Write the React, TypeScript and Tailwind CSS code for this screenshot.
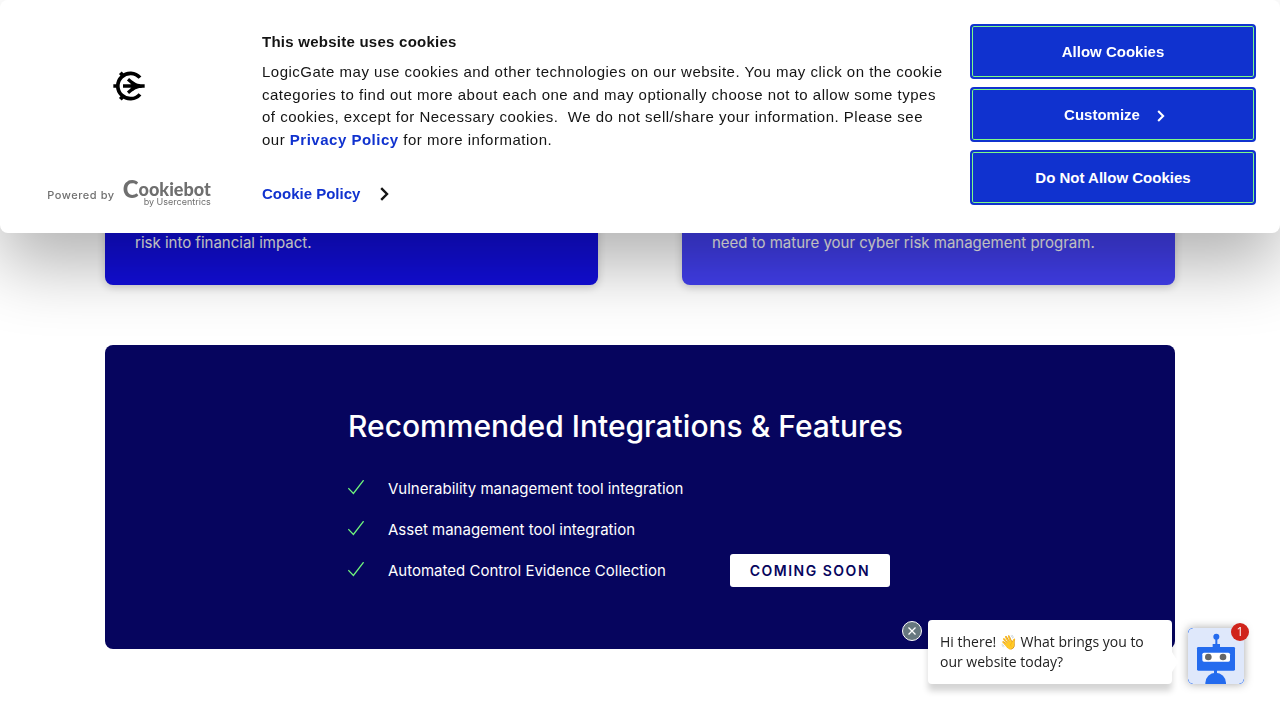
import React from "react";

function LogicGateMark() {
  return (
    <svg className="h-8 w-8" viewBox="68 59 96 96" role="img" aria-label="LogicGate">
      <g fill="none" stroke="#000">
        <path d="M149 82 A38 38 0 1 0 149 132" strokeWidth="11" />
        <path d="M69 107H84M90 67L99 77M90 147L99 137" strokeWidth="11" />
        <path d="M98 107H140M113 87L136 106M113 127L136 108" strokeWidth="10" />
      </g>
      <path d="M126 91C137 100 146 102 163 102V112C146 112 137 114 126 123L120 116L130 107L120 98Z" fill="#000" />
    </svg>
  );
}

function Chevron({ className }: { className: string }) {
  return (
    <svg className={className} viewBox="0 0 9 14" fill="none" stroke="currentColor" strokeWidth="2.4" aria-hidden="true">
      <path d="M1.2 1.2L7 7L1.2 12.8" />
    </svg>
  );
}

function Check() {
  return (
    <svg className="h-4 w-4 shrink-0" viewBox="0 0 16 16" fill="none" stroke="#6ff57c" strokeWidth="1.3" aria-hidden="true">
      <path d="M0.3 8.2L5.4 13.4L15.6 0.2" />
    </svg>
  );
}

function ConsentButton({ children }: { children: React.ReactNode }) {
  return (
    <button
      type="button"
      className="flex h-[55px] w-full items-center justify-center rounded border-2 border-[#1032cf] bg-[#1032cf] pt-px text-[15px] font-semibold text-white shadow-[inset_0_0_0_1px_#7dfa86]"
    >
      {children}
    </button>
  );
}

function CookieBanner() {
  return (
    <section
      aria-label="Cookie consent"
      className="fixed inset-x-0 top-0 z-20 flex rounded-lg bg-white px-6 pt-6 pb-[25px] font-['Liberation_Sans',sans-serif] text-[15px] text-[#141414] shadow-[0_32px_68px_rgba(0,0,0,0.3)]"
    >
      <div className="mr-7 flex min-h-[184px] w-[210px] shrink-0 flex-col items-center justify-between pt-[46px]">
        <LogicGateMark />
        <a href="#cookiebot" className="flex items-center gap-2 text-[#6f6f6f]">
          <span className="pt-px font-[Inter,sans-serif] text-[11px] leading-4 font-medium tracking-wider">Powered by</span>
          <span className="flex flex-col items-end">
            <span className="flex h-[15px] items-center font-[Lato,sans-serif] leading-[15px] font-black">
              <span className="text-[24px]">C</span>
              <span className="pt-px text-[18px]">ookiebot</span>
            </span>
            <span className="font-[Inter,sans-serif] text-[9px] leading-[12px]">by Usercentrics</span>
          </span>
        </a>
      </div>

      <div className="mr-6 flex-1 pt-[7px]">
        <h2 className="leading-[22px] font-bold tracking-[0.25px]">This website uses cookies</h2>
        <p className="mt-2 leading-normal tracking-[0.5px]">
          LogicGate may use cookies and other technologies on our website. You may click on the cookie categories to
          find out more about each one and may optionally choose not to allow some types of cookies, except for
          Necessary cookies.&nbsp; We do not sell/share your information. Please see our{" "}
          <a href="#privacy" className="font-bold text-[#1032cf]">
            Privacy Policy
          </a>{" "}
          for more information.
        </p>
        <a
          href="#cookie-policy"
          className="mt-8 flex items-center gap-5 leading-normal font-bold text-[#1032cf]"
        >
          Cookie Policy
          <Chevron className="h-[14px] w-[9px] text-[#141414]" />
        </a>
      </div>

      <div className="flex w-[286px] shrink-0 flex-col gap-2">
        <ConsentButton>Allow Cookies</ConsentButton>
        <ConsentButton>
          <span className="mr-[17px] ml-[3px]">Customize</span>
          <Chevron className="mt-[2px] h-3 w-2" />
        </ConsentButton>
        <ConsentButton>Do Not Allow Cookies</ConsentButton>
      </div>
    </section>
  );
}

function BotAvatar() {
  return (
    <svg className="h-14 w-14 rounded" viewBox="0 0 168 168" aria-hidden="true">
      <rect width="168" height="168" fill="#dfe8fb" />
      <g fill="#246bee">
        <circle cx="85" cy="26" r="9" />
        <rect x="82" y="30" width="6" height="22" />
        <rect x="74" y="48" width="22" height="12" />
        <rect x="27" y="57" width="114" height="71" rx="4" />
        <rect x="78" y="126" width="9" height="12" />
        <circle cx="83" cy="165" r="31" />
      </g>
      <rect x="43" y="74" width="83" height="27" rx="5" fill="#fff" />
      <circle cx="61" cy="87" r="10" fill="#666" />
      <circle cx="105" cy="87" r="10" fill="#666" />
      <path
        d="M1 14Q1 1 14 1M1 154Q1 167 14 167M154 167Q167 167 167 154"
        fill="none"
        stroke="#246bee"
        strokeWidth="3"
        opacity="0.6"
      />
    </svg>
  );
}

function ChatWidget() {
  return (
    <aside className="fixed right-9 bottom-9 z-30 flex items-end font-['Open_Sans',sans-serif]">
      <button
        type="button"
        aria-label="Dismiss message"
        className="mt-px mr-[6px] flex h-5 w-5 items-center justify-center self-start rounded-full border border-white bg-[#66777f]"
      >
        <svg className="h-2 w-2" viewBox="0 0 8 8" stroke="#fff" strokeWidth="1.3" aria-hidden="true">
          <path d="M0.5 0.5L7.5 7.5M7.5 0.5L0.5 7.5" />
        </svg>
      </button>
      <div className="relative mr-4 w-[244px] rounded bg-white p-3 shadow-[0_7px_6px_rgba(0,0,0,0.17)]">
        <p className="text-[14px] leading-5 text-[#222]">Hi there! 👋 What brings you to our website today?</p>
        <svg className="absolute top-8 left-full h-5 w-[6px]" viewBox="0 0 6 20" fill="#fff" aria-hidden="true">
          <path d="M0 0L6 10L0 20Z" />
        </svg>
      </div>
      <button type="button" aria-label="Open chat" className="relative rounded shadow-[0_0_10px_rgba(0,0,0,0.35)]">
        <BotAvatar />
        <span className="absolute -top-[5px] -right-[5px] flex h-[18px] w-[18px] items-center justify-center rounded-full bg-[#d0241b] text-[12px] text-white">
          1
        </span>
      </button>
    </aside>
  );
}

const features = [
  { label: "Vulnerability management tool integration", soon: false },
  { label: "Asset management tool integration", soon: false },
  { label: "Automated Control Evidence Collection", soon: true },
];

export default function App() {
  return (
    <div className="min-h-screen bg-white font-[Inter,sans-serif] text-[15px] [font-variation-settings:'opsz'_14]">
      <CookieBanner />
      <main className="mx-auto max-w-[1070px] pt-[200px] pb-[71px]">
        <div className="grid grid-cols-2 gap-[84px] text-[#f5f5f5]">
          <div className="rounded-lg bg-[#120edb] px-[30px] pt-[31px] pb-[31px] shadow-[0_2px_8px_rgba(0,0,0,0.2)]">
            <p className="leading-[23px]">risk into financial impact.</p>
          </div>
          <div className="rounded-lg bg-[#423fee] px-[30px] pt-[31px] pb-[31px] shadow-[0_2px_8px_rgba(0,0,0,0.2)]">
            <p className="leading-[23px]">need to mature your cyber risk management program.</p>
          </div>
        </div>

        <section className="mt-[60px] rounded-lg bg-[#06055e] pt-[60px] pb-[59px] text-white">
          <div className="mx-auto w-[584px]">
            <h2 className="text-[30px] leading-[42px] font-medium">Recommended Integrations &amp; Features</h2>
            <ul className="mt-5">
              {features.map((f) => (
                <li key={f.label} className="flex h-[41px] items-center">
                  <Check />
                  <span className="ml-6 pt-[3px]">{f.label}</span>
                  {f.soon && (
                    <span className="mt-[2px] ml-16 rounded-[3px] bg-white px-5 py-[6px] text-[14px] leading-[21px] font-semibold tracking-[1.5px] text-[#06055e]">
                      COMING SOON
                    </span>
                  )}
                </li>
              ))}
            </ul>
          </div>
        </section>
      </main>
      <ChatWidget />
    </div>
  );
}
